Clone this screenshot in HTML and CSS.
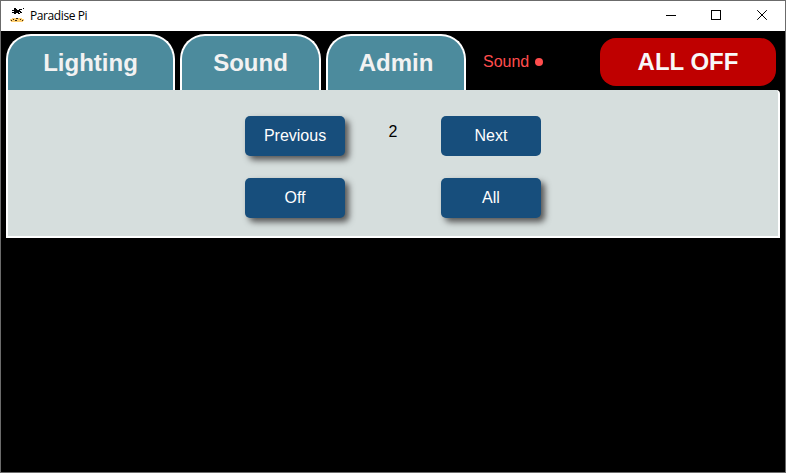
FILE: index.html
```html
<!DOCTYPE html>
<html lang="en">
<head>
<meta charset="utf-8">
<title>Paradise Pi</title>
<link rel="stylesheet" href="styles.css">
</head>
<body>
<div class="window">
  <header class="titlebar">
    <svg class="app-icon" width="16" height="16" viewBox="0 0 16 16" shape-rendering="crispEdges">
      <path fill="#000" d="M5 0h2v1h1v1h2v-1h3v1h-2v1h1v1h1v1h-2v-1h-1v1h1v1h-2v-1h-2v1h-2v-1h-2v-1h2v-1h-2v-1h2v-1h-1zM14 0h1v1h-1z"/>
      <path fill="#ffcf70" d="M3 10h10v1h2v2h-1v1h-12v-1h-1v-2h2z"/>
      <path fill="#3b2b16" d="M4 11h1v1h-1zM7 10h2v1h-2zM6 12h2v1h-2zM11 11h1v1h-1zM2 12h1v1h-1zM13 12h1v1h-1z"/>
    </svg>
    <span class="title">Paradise Pi</span>
    <svg class="controls" width="135" height="30" viewBox="0 0 135 30" fill="none" stroke="#000" shape-rendering="crispEdges">
      <path d="M16 14.5h10"/>
      <rect x="61.5" y="9.5" width="9" height="9"/>
      <path shape-rendering="auto" d="M107.200 9.200l9.600 9.600M116.800 9.200l-9.600 9.600"/>
    </svg>
  </header>
  <main class="app">
    <nav class="nav">
      <button class="tab tab-lighting">Lighting</button>
      <button class="tab tab-sound">Sound</button>
      <button class="tab tab-admin">Admin</button>
      <span class="status">Sound <i class="dot"></i></span>
      <button class="all-off">ALL OFF</button>
    </nav>
    <section class="panel">
      <button class="btn">Previous</button>
      <span class="page">2</span>
      <button class="btn flat">Next</button>
      <button class="btn">Off</button>
      <span></span>
      <button class="btn">All</button>
    </section>
  </main>
</div>
</body>
</html>
```
FILE: styles.css
```css
* { box-sizing: border-box; }

body {
  margin: 0;
  background: #000;
  font-family: "Liberation Sans", Arial, sans-serif;
}

button {
  border: 0;
  padding: 0;
  font: inherit;
}

.window {
  width: 786px;
  height: 473px;
  border: 1px solid #6b6b6b;
  background: #000;
}

.titlebar {
  display: flex;
  align-items: center;
  height: 30px;
  padding-left: 8px;
  background: #fff;
}

.app-icon { margin-right: 5px; }

.title {
  font: 12px/16px "Open Sans", sans-serif;
  letter-spacing: -0.4px;
  color: #000;
}

.controls { margin-left: auto; }

.app { padding: 3px 5px 0; }

.nav {
  display: flex;
  gap: 5px;
  height: 56px;
}

.tab {
  height: 56px;
  border: 2px solid #fff;
  border-bottom: 0;
  border-radius: 25px 25px 0 0;
  background: #4c8b9d;
  color: #f2f2f2;
  font-size: 24px;
  font-weight: bold;
}

.tab-lighting { width: 169px; }
.tab-sound { width: 141px; }
.tab-admin { width: 140px; }

.status {
  display: flex;
  align-items: center;
  gap: 6px;
  height: 56px;
  margin-left: 12px;
  color: #ff4d4d;
  font-size: 16px;
}

.dot {
  width: 8px;
  height: 8px;
  border-radius: 50%;
  background: #ff4d4d;
}

.all-off {
  width: 176px;
  height: 48px;
  margin: 4px 4px 0 auto;
  border-radius: 16px;
  background: #bf0000;
  color: #f8f8f8;
  font-size: 24px;
  font-weight: bold;
}

.panel {
  display: grid;
  grid-template-columns: 100px 96px 100px;
  grid-auto-rows: 40px;
  row-gap: 22px;
  justify-content: center;
  width: 774px;
  height: 148px;
  padding-top: 26px;
  border: 2px solid #fff;
  border-top: 0;
  border-radius: 0 4px 0 0;
  background: #d6dedd;
}

.btn {
  border-radius: 5px;
  background: #174e7c;
  box-shadow: 4px 4px 6px #555;
  color: #fff;
  font-size: 16px;
}

.flat { box-shadow: none; }

.page {
  padding-top: 7px;
  color: #000;
  font-size: 16px;
  line-height: 18px;
  text-align: center;
}
```
